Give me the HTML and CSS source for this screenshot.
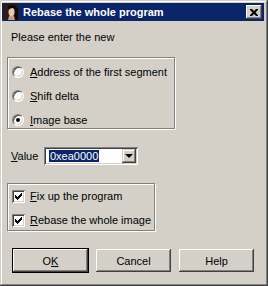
FILE: index.html
```html
<!DOCTYPE html>
<html lang="en">
<head>
    <meta charset="UTF-8">
    <title>Rebase the whole program</title>
    <link rel="stylesheet" href="styles.css">
</head>
<body>
    <div class="dialog">
        <div class="titlebar">
            <svg class="app-icon" width="16" height="16" viewBox="0 0 16 16">
                <rect width="16" height="16" fill="#2a1c18"/>
                <path d="M9 1 C13 1 15 4 15 8 L15 16 L11 16 L12 10 C12 6 11 4 9 4 Z" fill="#120a08"/>
                <ellipse cx="8.5" cy="8" rx="3" ry="4.2" fill="#e8c8b0"/>
                <path d="M5 2 C7 0 12 1 12 5 C10 3 7 4 6 6 Z" fill="#0e0806"/>
                <path d="M6 12 L11 12 L12 16 L5 16 Z" fill="#c89c88"/>
            </svg>
            <span class="title">Rebase the whole program</span>
            <span class="close-btn">
                <svg width="8" height="7" viewBox="0 0 8 7">
                    <path d="M0 0h2l2 2 2-2h2v1l-2.5 2.5 2.5 2.5v1h-2l-2-2-2 2h-2v-1l2.5-2.5-2.5-2.5z" fill="#000"/>
                </svg>
            </span>
        </div>

        <div class="content">
            <p class="prompt">Please enter the new</p>

            <!-- base choice -->
            <div class="group radios">
                <div class="option"><span class="radio"></span><span><u>A</u>ddress of the first segment</span></div>
                <div class="option"><span class="radio"></span><span><u>S</u>hift delta</span></div>
                <div class="option"><span class="radio checked"></span><span><u>I</u>mage base</span></div>
            </div>

            <div class="value-row">
                <span class="value-label"><u>V</u>alue</span>
                <div class="combo">
                    <span class="combo-text"><span class="selected">0xea0000</span></span>
                    <span class="combo-btn"><span class="arrow"></span></span>
                </div>
            </div>

            <div class="group checks">
                <div class="option">
                    <span class="checkbox">
                        <svg width="7" height="7" viewBox="0 0 7 7"><path d="M6 0h1v3h-1v1h-1v1h-1v1h-1v1h-1v-1h-1v-1h-1v-3h1v1h1v1h1v-1h1v-1h1v-1h1z" fill="#000"/></svg>
                    </span>
                    <span><u>F</u>ix up the program</span>
                </div>
                <div class="option">
                    <span class="checkbox">
                        <svg width="7" height="7" viewBox="0 0 7 7"><path d="M6 0h1v3h-1v1h-1v1h-1v1h-1v1h-1v-1h-1v-1h-1v-3h1v1h1v1h1v-1h1v-1h1v-1h1z" fill="#000"/></svg>
                    </span>
                    <span><u>R</u>ebase the whole image</span>
                </div>
            </div>

            <div class="buttons">
                <span class="btn default">O<u>K</u></span>
                <span class="btn">Cancel</span>
                <span class="btn help">Help</span>
            </div>
        </div>
    </div>
</body>
</html>
```

FILE: styles.css
```css
* {
    box-sizing: border-box;
}

body {
    margin: 0;
    padding: 0;
    font-family: "Liberation Sans", Arial, sans-serif;
    font-size: 11px;
    color: #000;
    background-color: #d4d0c8;
}

u {
    text-decoration: underline;
    text-underline-offset: 1px;
}

.dialog {
    width: 268px;
    height: 286px;
    padding: 3px 4px 4px 2px;
    background-color: #d4d0c8;
    box-shadow: inset -1px -1px #404040, inset 1px 1px #d4d0c8,
                inset -2px -2px #808080, inset 2px 2px #fff;
}

.titlebar {
    height: 18px;
    display: flex;
    align-items: center;
    padding: 0 2px 0 1px;
    background-color: #0a246a;
}

.app-icon {
    flex-shrink: 0;
}

.title {
    flex: 1;
    margin-left: 4px;
    color: #fff;
    font-weight: bold;
    font-size: 11px;
}

.close-btn {
    width: 16px;
    height: 14px;
    display: flex;
    align-items: center;
    justify-content: center;
    background-color: #d4d0c8;
    box-shadow: inset -1px -1px #404040, inset 1px 1px #fff,
                inset -2px -2px #808080;
}

.content {
    padding: 0 0 0 5px;
    display: flex;
    flex-direction: column;
    align-items: flex-start;
}

.prompt {
    margin: 10px 0 0 4px;
    line-height: 13px;
}

.group {
    border: 1px solid #808080;
    box-shadow: 1px 1px 0 #fff, inset 1px 1px 0 #fff;
    display: flex;
    flex-direction: column;
}

.radios {
    width: 168px;
    margin-top: 13px;
    padding: 7px 0 1px 4px;
    gap: 10px;
}

.checks {
    width: 148px;
    margin-top: 18px;
    padding: 5px 0 3px 4px;
    gap: 10px;
}

.option {
    height: 14px;
    display: flex;
    align-items: center;
}

.radio {
    width: 12px;
    height: 12px;
    margin-right: 6px;
    border-radius: 50%;
    background: #fff;
    border: 1px solid;
    border-color: #808080 #fff #fff #808080;
    box-shadow: inset 1px 1px #404040, inset -1px -1px #d4d0c8;
    position: relative;
}

.radio.checked::after {
    content: "";
    position: absolute;
    left: 3px;
    top: 3px;
    width: 4px;
    height: 4px;
    border-radius: 50%;
    background: #000;
}

.checkbox {
    width: 13px;
    height: 13px;
    margin-right: 5px;
    display: flex;
    align-items: center;
    justify-content: center;
    background: #fff;
    box-shadow: inset 1px 1px #808080, inset -1px -1px #fff,
                inset 2px 2px #404040, inset -2px -2px #d4d0c8;
}

.checkbox svg {
    display: block;
}

.value-row {
    margin-top: 18px;
    height: 18px;
    display: flex;
    align-items: center;
}

.value-label {
    margin-left: 4px;
    width: 33px;
}

.combo {
    width: 94px;
    height: 18px;
    display: flex;
    align-items: center;
    padding: 2px;
    background: #fff;
    box-shadow: inset 1px 1px #808080, inset -1px -1px #fff,
                inset 2px 2px #404040, inset -2px -2px #d4d0c8;
}

.combo-text {
    flex: 1;
    padding-left: 3px;
}

.selected {
    display: inline-block;
    padding: 0 1px;
    line-height: 12px;
    background: #0a246a;
    color: #fff;
}

.combo-btn {
    width: 14px;
    height: 14px;
    display: flex;
    align-items: center;
    justify-content: center;
    background: #d4d0c8;
    box-shadow: inset -1px -1px #404040, inset 1px 1px #d4d0c8,
                inset -2px -2px #808080, inset 2px 2px #fff;
}

.arrow {
    width: 0;
    height: 0;
    border-left: 4px solid transparent;
    border-right: 4px solid transparent;
    border-top: 4px solid #000;
}

.buttons {
    margin-top: 17px;
    padding-left: 5px;
    display: flex;
    align-items: center;
    gap: 7px;
}

.btn {
    width: 75px;
    height: 23px;
    display: flex;
    align-items: center;
    justify-content: center;
    background: #d4d0c8;
    box-shadow: inset -1px -1px #404040, inset 1px 1px #fff,
                inset -2px -2px #808080;
}

.btn.default {
    width: 77px;
    height: 25px;
    border: 1px solid #000;
}

.btn.help {
    margin-left: 1px;
}
```
